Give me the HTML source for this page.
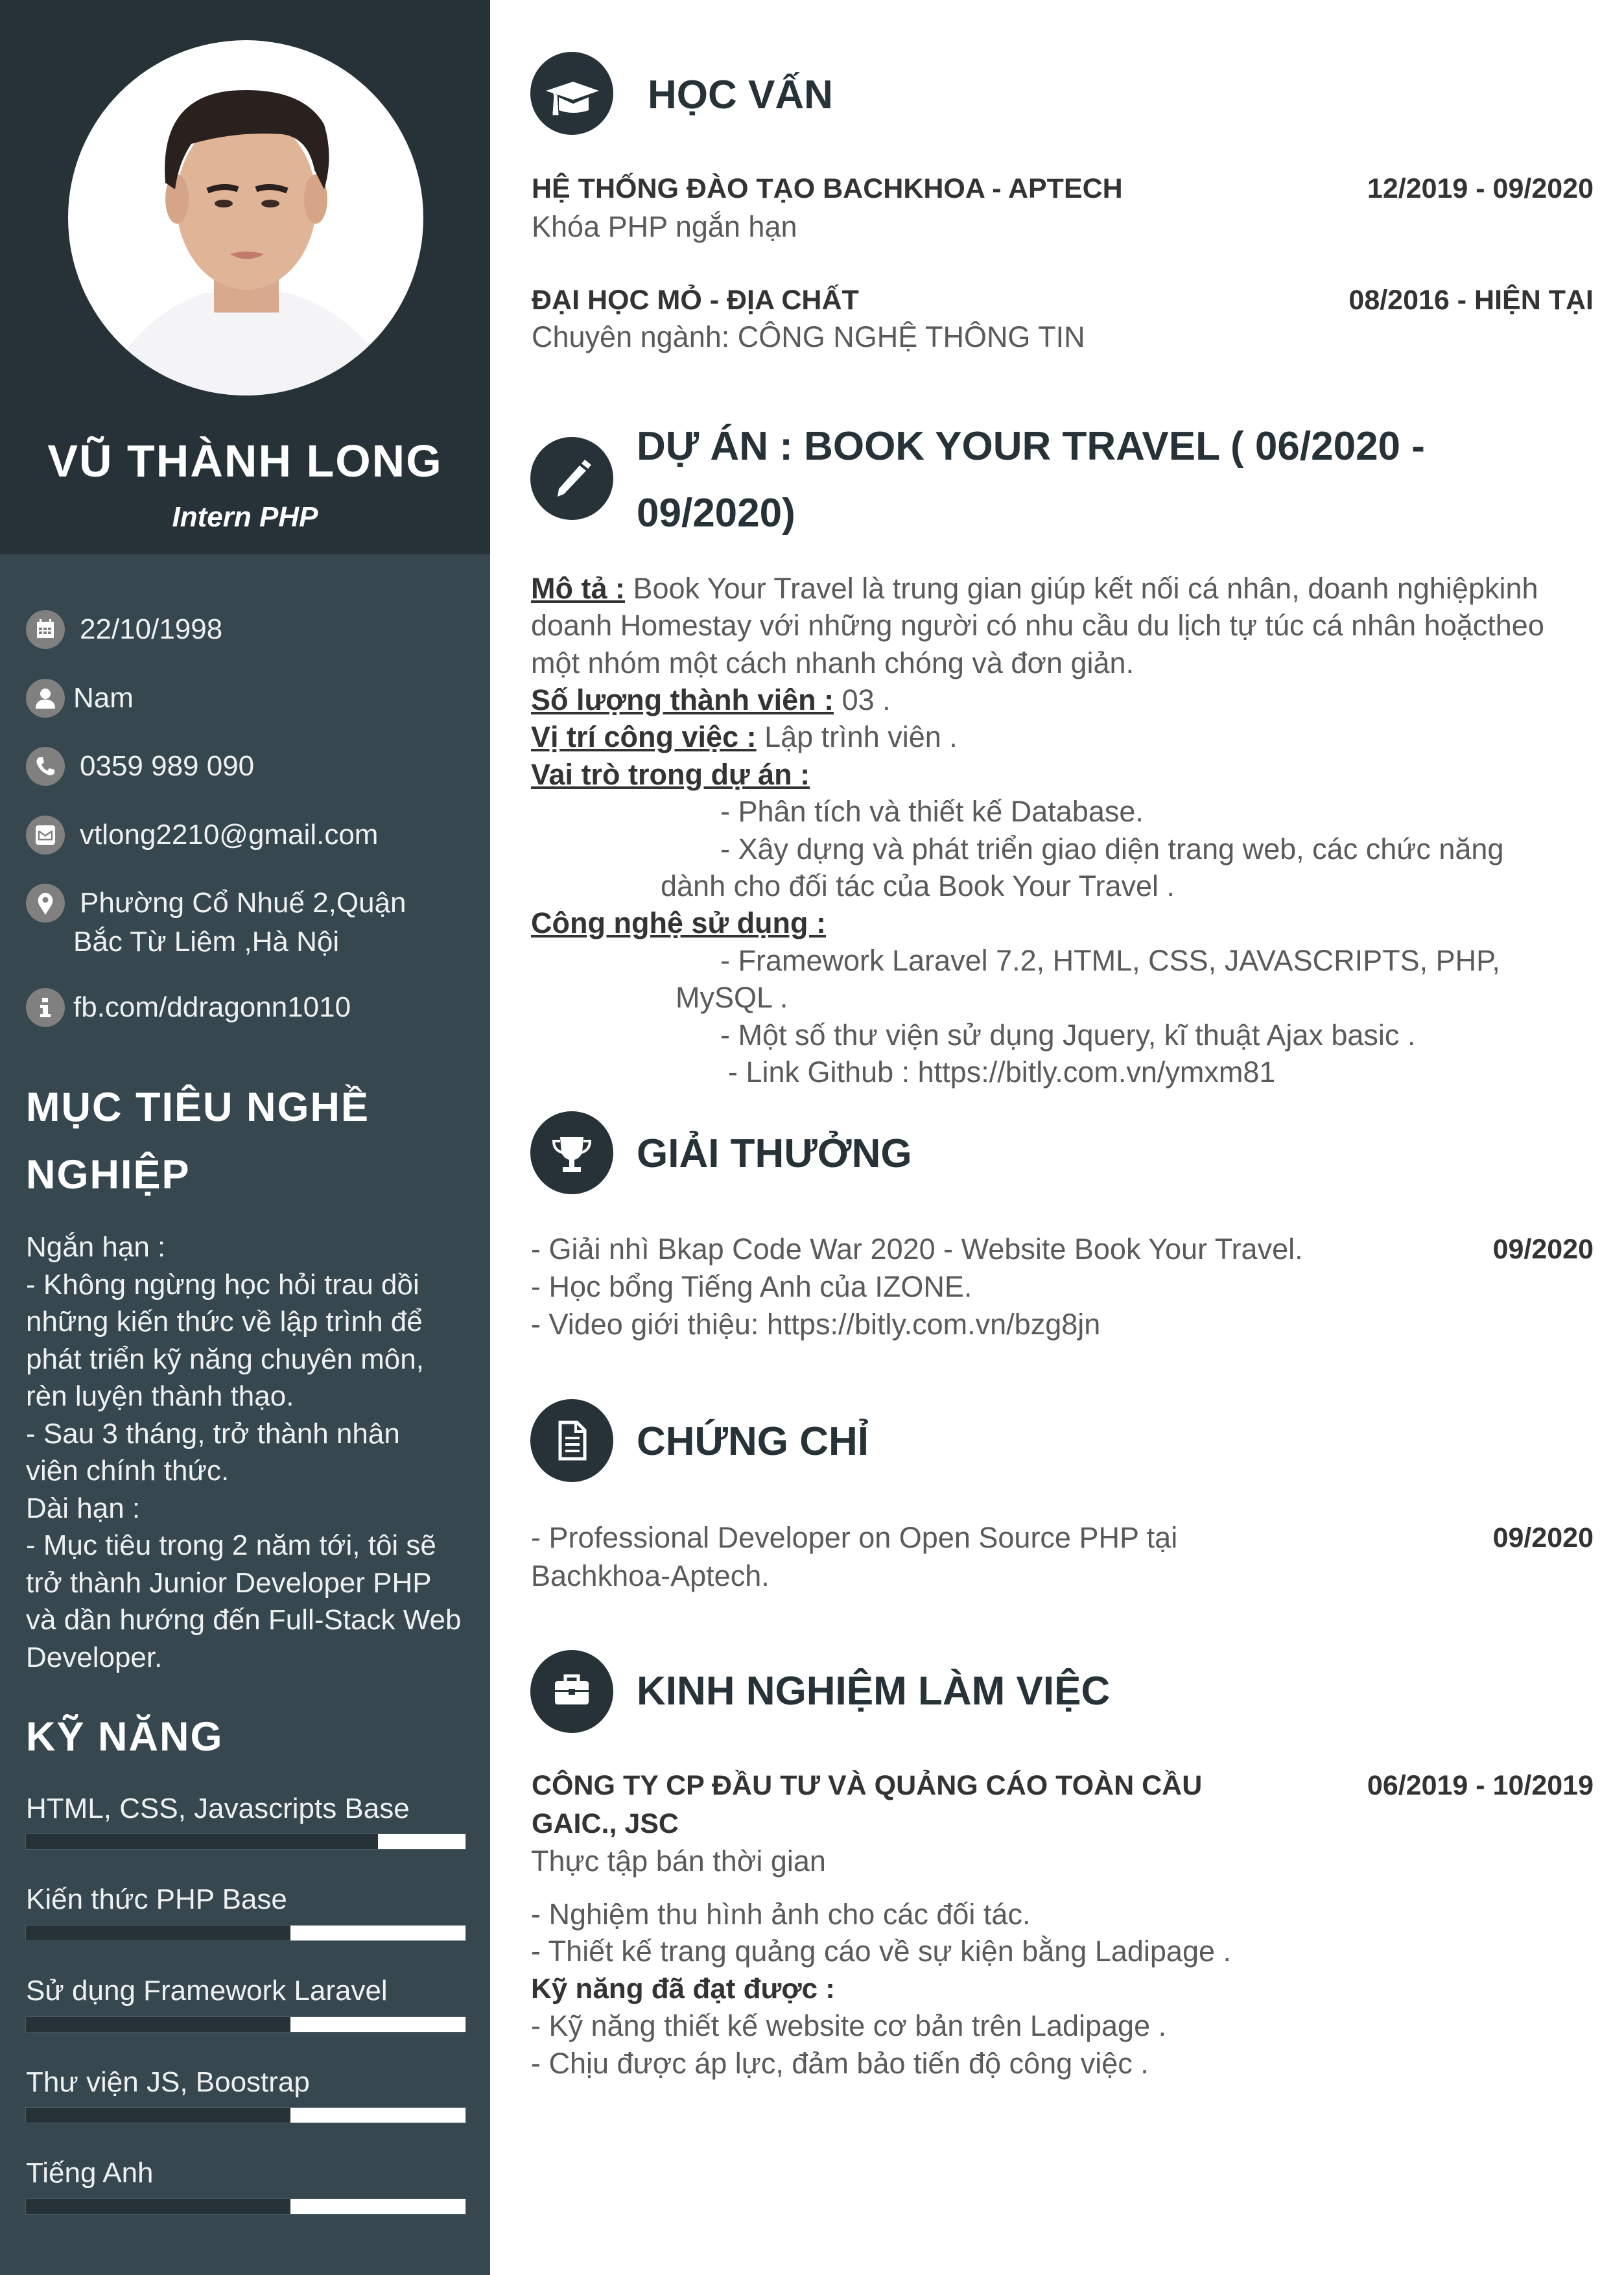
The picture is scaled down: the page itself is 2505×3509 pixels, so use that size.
<!DOCTYPE html>
<html><head><meta charset="utf-8">
<style>
*{margin:0;padding:0;box-sizing:border-box}
body{width:2505px;height:3509px;position:relative;background:#fff;font-family:"Liberation Sans","DejaVu Sans",sans-serif;overflow:hidden}
.t{position:absolute;white-space:nowrap;line-height:60px;height:60px}
.side{position:absolute;left:0;top:0;width:756px;height:3509px;background:#37474f}
.topb{position:absolute;left:0;top:0;width:756px;height:855px;background:#263238}
.w{color:#eef1f2;font-size:44px}
.ic{position:absolute;width:60px;height:60px;border-radius:50%;background:#808080}
.ic svg{position:absolute;left:0;top:0}
.sh{color:#fff;font-weight:bold;font-size:63px;line-height:100px;height:100px;letter-spacing:2px}
.bar{position:absolute;left:39px;width:680px;height:25px;background:#fff;border:1px solid #4a5a62}
.bar div{height:100%;background:#263238}
.hc{position:absolute;width:128px;height:128px;border-radius:50%;background:#263238}
.hc svg{position:absolute;left:0;top:0}
.h{color:#263238;font-weight:bold;font-size:62px;line-height:80px;height:80px}
.b{color:#333;font-weight:bold;font-size:43px}
.r{right:47px}
.n{color:#5a5a5a;font-size:45px}
.u{text-decoration:underline;font-weight:bold;color:#333}
</style></head><body>
<div class="side"></div>
<div class="topb"></div>
<svg style="position:absolute;left:105px;top:62px" width="548" height="548" viewBox="0 0 548 548">
<defs><clipPath id="c"><circle cx="274" cy="274" r="274"/></clipPath></defs>
<circle cx="274" cy="274" r="274" fill="#fff"/>
<g clip-path="url(#c)">
<path d="M60 520 Q120 420 210 390 L340 390 Q440 420 500 520 L500 560 L60 560Z" fill="#f4f4f6"/>
<rect x="225" y="330" width="100" height="90" fill="#d8a98c"/>
<ellipse cx="275" cy="250" rx="108" ry="135" fill="#e0b497"/>
<ellipse cx="168" cy="245" rx="18" ry="38" fill="#d6a486"/>
<ellipse cx="382" cy="245" rx="18" ry="38" fill="#d6a486"/>
<path d="M150 220 Q140 90 250 78 Q360 70 395 130 Q410 180 395 230 L380 200 Q370 150 330 145 Q260 140 190 160 Q170 190 165 230Z" fill="#2a211e"/>
<path d="M215 232 Q240 222 262 230" stroke="#2a211e" stroke-width="9" fill="none"/>
<path d="M290 230 Q312 222 338 232" stroke="#2a211e" stroke-width="9" fill="none"/>
<ellipse cx="240" cy="252" rx="14" ry="6" fill="#3a2a24"/>
<ellipse cx="312" cy="252" rx="14" ry="6" fill="#3a2a24"/>
<path d="M250 330 Q276 322 302 330 Q276 345 250 330Z" fill="#c27a6c"/>
</g></svg>
<div class="t" style="left:0;width:756px;text-align:center;top:676px;height:70px;line-height:70px;color:#fff;font-weight:bold;font-size:70px;letter-spacing:2px">VŨ THÀNH LONG</div>
<div class="t" style="left:0;width:756px;text-align:center;top:768px;color:#fff;font-weight:bold;font-style:italic;font-size:44px">Intern PHP</div>

<div class="ic" style="left:40px;top:941px"><svg width="60" height="60" viewBox="0 0 60 60"><rect x="17" y="18" width="26" height="25" fill="#fff"/><g fill="#808080"><rect x="20" y="27" width="5" height="4"/><rect x="27" y="27" width="5" height="4"/><rect x="34" y="27" width="5" height="4"/><rect x="20" y="33" width="5" height="4"/><rect x="27" y="33" width="5" height="4"/><rect x="34" y="33" width="5" height="4"/></g><rect x="21" y="14" width="3" height="7" fill="#fff"/><rect x="36" y="14" width="3" height="7" fill="#fff"/></svg></div>
<div class="t w" style="left:123px;top:941px">22/10/1998</div>
<div class="ic" style="left:40px;top:1047px"><svg width="60" height="60" viewBox="0 0 60 60"><circle cx="30" cy="23" r="8" fill="#fff"/><path d="M15 46 Q15 32 30 32 Q45 32 45 46Z" fill="#fff"/></svg></div>
<div class="t w" style="left:113px;top:1047px">Nam</div>
<div class="ic" style="left:40px;top:1152px"><svg width="60" height="60" viewBox="0 0 60 60"><path d="M20 16 L26 16 L28 24 L24 27 Q27 34 33 37 L36 33 L44 35 L44 41 Q40 45 34 43 Q22 38 17 26 Q15 20 20 16Z" fill="#fff"/></svg></div>
<div class="t w" style="left:123px;top:1152px">0359 989 090</div>
<div class="ic" style="left:40px;top:1258px"><svg width="60" height="60" viewBox="0 0 60 60"><rect x="15" y="15" width="30" height="30" rx="4" fill="#fff"/><path d="M20 24 L30 31 L40 24 M20 24 L20 37 L40 37 L40 24" stroke="#808080" stroke-width="2.5" fill="none"/></svg></div>
<div class="t w" style="left:123px;top:1258px">vtlong2210@gmail.com</div>
<div class="ic" style="left:40px;top:1363px"><svg width="60" height="60" viewBox="0 0 60 60"><path d="M30 48 L20 32 Q16 22 24 16 Q30 12 36 16 Q44 22 40 32Z" fill="#fff"/><circle cx="30" cy="25" r="4.5" fill="#808080"/></svg></div>
<div class="t w" style="left:123px;top:1363px">Phường Cổ Nhuế 2,Quận</div>
<div class="t w" style="left:113px;top:1423px">Bắc Từ Liêm ,Hà Nội</div>
<div class="ic" style="left:40px;top:1524px"><svg width="60" height="60" viewBox="0 0 60 60"><rect x="25" y="15" width="9" height="7" fill="#fff"/><path d="M22 26 L34 26 L34 40 L38 40 L38 45 L22 45 L22 40 L26 40 L26 31 L22 31Z" fill="#fff"/></svg></div>
<div class="t w" style="left:113px;top:1524px">fb.com/ddragonn1010</div>

<div class="t sh" style="left:40px;top:1658px">MỤC TIÊU NGHỀ</div>
<div class="t sh" style="left:40px;top:1762px">NGHIỆP</div>
<div class="t w" style="left:40px;top:1894px">Ngắn hạn :</div>
<div class="t w" style="left:40px;top:1952px">- Không ngừng học hỏi trau dồi</div>
<div class="t w" style="left:40px;top:2009px">những kiến thức về lập trình để</div>
<div class="t w" style="left:40px;top:2067px">phát triển kỹ năng chuyên môn,</div>
<div class="t w" style="left:40px;top:2124px">rèn luyện thành thạo.</div>
<div class="t w" style="left:40px;top:2182px">- Sau 3 tháng, trở thành nhân</div>
<div class="t w" style="left:40px;top:2239px">viên chính thức.</div>
<div class="t w" style="left:40px;top:2297px">Dài hạn :</div>
<div class="t w" style="left:40px;top:2354px">- Mục tiêu trong 2 năm tới, tôi sẽ</div>
<div class="t w" style="left:40px;top:2412px">trở thành Junior Developer  PHP</div>
<div class="t w" style="left:40px;top:2469px">và dần hướng đến Full-Stack Web</div>
<div class="t w" style="left:40px;top:2527px">Developer.</div>
<div class="t sh" style="left:40px;top:2629px">KỸ NĂNG</div>

<div class="t w" style="left:40px;top:2760px">HTML, CSS, Javascripts Base</div>
<div class="bar" style="top:2828px"><div style="width:543px"></div></div>
<div class="t w" style="left:40px;top:2900px">Kiến thức PHP Base</div>
<div class="bar" style="top:2969px"><div style="width:408px"></div></div>
<div class="t w" style="left:40px;top:3041px">Sử dụng Framework Laravel</div>
<div class="bar" style="top:3110px"><div style="width:408px"></div></div>
<div class="t w" style="left:40px;top:3182px">Thư viện JS, Boostrap</div>
<div class="bar" style="top:3250px"><div style="width:408px"></div></div>
<div class="t w" style="left:40px;top:3322px">Tiếng Anh</div>
<div class="bar" style="top:3391px"><div style="width:408px"></div></div>

<div class="hc" style="left:818px;top:80px"><svg width="128" height="128" viewBox="0 0 128 128"><path d="M24 60 L66 46 L106 60 L66 74Z" fill="#fff"/><path d="M44 70 L44 90 Q66 98 90 90 L90 70 L66 80Z" fill="#fff"/><path d="M36 64 L38 66 L36 96 L42 96 L40 66" fill="#fff" stroke="#fff" stroke-width="3"/></svg></div>
<div class="t h" style="left:999px;top:107px">HỌC VẤN</div>
<div class="t b" style="left:820px;top:261px">HỆ THỐNG ĐÀO TẠO BACHKHOA - APTECH</div>
<div class="t b r" style="top:261px">12/2019 - 09/2020</div>
<div class="t n" style="left:820px;top:320px">Khóa PHP ngắn hạn</div>
<div class="t b" style="left:820px;top:433px">ĐẠI HỌC MỎ - ĐỊA CHẤT</div>
<div class="t b r" style="top:433px">08/2016 - HIỆN TẠI</div>
<div class="t n" style="left:820px;top:490px">Chuyên ngành: CÔNG NGHỆ THÔNG TIN</div>

<div class="hc" style="left:818px;top:674px"><svg width="128" height="128" viewBox="0 0 128 128"><path d="M52 88 L42 92 L44 80 L76 44 L86 52Z" fill="#fff"/><path d="M79 41 L84 35 L94 43 L89 49Z" fill="#fff"/></svg></div>
<div class="t h" style="left:982px;top:649px">DỰ ÁN : BOOK YOUR TRAVEL ( 06/2020 -</div>
<div class="t h" style="left:982px;top:752px">09/2020)</div>

<div class="t n" style="left:819px;top:878px"><span class="u">Mô tả :</span> Book Your Travel là trung gian giúp kết nối cá nhân, doanh nghiệpkinh</div>
<div class="t n" style="left:819px;top:935px">doanh Homestay với những người có nhu cầu du lịch tự túc cá nhân hoặctheo</div>
<div class="t n" style="left:819px;top:993px">một nhóm một cách nhanh chóng và đơn giản.</div>
<div class="t n" style="left:819px;top:1050px"><span class="u">Số lượng thành viên :</span> 03 .</div>
<div class="t n" style="left:819px;top:1107px"><span class="u">Vị trí công việc :</span> Lập trình viên .</div>
<div class="t n" style="left:819px;top:1165px"><span class="u">Vai trò trong dự án :</span></div>
<div class="t n" style="left:1111px;top:1222px">- Phân tích và thiết kế Database.</div>
<div class="t n" style="left:1111px;top:1280px">- Xây dựng và phát triển giao diện trang web, các chức năng</div>
<div class="t n" style="left:1019px;top:1337px">dành cho đối tác của Book Your Travel .</div>
<div class="t n" style="left:819px;top:1394px"><span class="u">Công nghệ sử dụng :</span></div>
<div class="t n" style="left:1111px;top:1452px">- Framework Laravel 7.2, HTML, CSS, JAVASCRIPTS, PHP,</div>
<div class="t n" style="left:1042px;top:1509px">MySQL .</div>
<div class="t n" style="left:1111px;top:1567px">- Một số thư viện sử dụng Jquery, kĩ thuật Ajax basic .</div>
<div class="t n" style="left:1123px;top:1624px">- Link Github : https://bitly.com.vn/ymxm81</div>

<div class="hc" style="left:818px;top:1714px"><svg width="128" height="128" viewBox="0 0 128 128"><path d="M46 40 L82 40 L80 64 Q76 74 64 76 Q52 74 48 64Z" fill="#fff"/><path d="M46 46 L36 46 Q36 60 50 64 M82 46 L92 46 Q92 60 78 64" stroke="#fff" stroke-width="4" fill="none"/><rect x="60" y="74" width="8" height="12" fill="#fff"/><rect x="50" y="86" width="28" height="8" fill="#fff"/></svg></div>
<div class="t h" style="left:982px;top:1740px">GIẢI THƯỞNG</div>
<div class="t n" style="left:819px;top:1897px">- Giải nhì Bkap Code War 2020 - Website Book Your Travel.</div>
<div class="t b r" style="top:1897px">09/2020</div>
<div class="t n" style="left:819px;top:1955px">- Học bổng Tiếng Anh của IZONE.</div>
<div class="t n" style="left:819px;top:2013px">- Video giới thiệu: https://bitly.com.vn/bzg8jn</div>

<div class="hc" style="left:818px;top:2158px"><svg width="128" height="128" viewBox="0 0 128 128"><path d="M46 36 L72 36 L84 48 L84 92 L46 92Z" fill="none" stroke="#fff" stroke-width="5"/><path d="M70 36 L70 50 L84 50" fill="none" stroke="#fff" stroke-width="4"/><rect x="54" y="58" width="22" height="4" fill="#fff"/><rect x="54" y="68" width="22" height="4" fill="#fff"/><rect x="54" y="78" width="22" height="4" fill="#fff"/></svg></div>
<div class="t h" style="left:982px;top:2184px">CHỨNG CHỈ</div>
<div class="t n" style="left:819px;top:2342px">- Professional Developer on Open Source PHP tại</div>
<div class="t b r" style="top:2342px">09/2020</div>
<div class="t n" style="left:819px;top:2401px">Bachkhoa-Aptech.</div>

<div class="hc" style="left:818px;top:2545px"><svg width="128" height="128" viewBox="0 0 128 128"><rect x="38" y="48" width="52" height="36" rx="4" fill="#fff"/><path d="M54 48 L54 40 L74 40 L74 48" fill="none" stroke="#fff" stroke-width="5"/><rect x="38" y="62" width="52" height="3" fill="#263238"/><rect x="59" y="60" width="10" height="9" fill="#263238"/></svg></div>
<div class="t h" style="left:982px;top:2569px">KINH NGHIỆM LÀM VIỆC</div>
<div class="t b" style="left:820px;top:2724px">CÔNG TY CP ĐẦU TƯ VÀ QUẢNG CÁO TOÀN CẦU</div>
<div class="t b r" style="top:2724px">06/2019 - 10/2019</div>
<div class="t b" style="left:820px;top:2783px">GAIC., JSC</div>
<div class="t n" style="left:819px;top:2841px">Thực tập bán thời gian</div>
<div class="t n" style="left:819px;top:2923px">- Nghiệm thu hình ảnh cho các đối tác.</div>
<div class="t n" style="left:819px;top:2980px">- Thiết kế trang quảng cáo về sự kiện bằng Ladipage  .</div>
<div class="t b" style="left:819px;top:3038px;font-size:44px">Kỹ năng đã đạt được :</div>
<div class="t n" style="left:819px;top:3095px">- Kỹ năng thiết kế website cơ bản trên Ladipage .</div>
<div class="t n" style="left:819px;top:3153px">- Chịu được áp lực, đảm bảo tiến độ công việc .</div>
</body></html>
